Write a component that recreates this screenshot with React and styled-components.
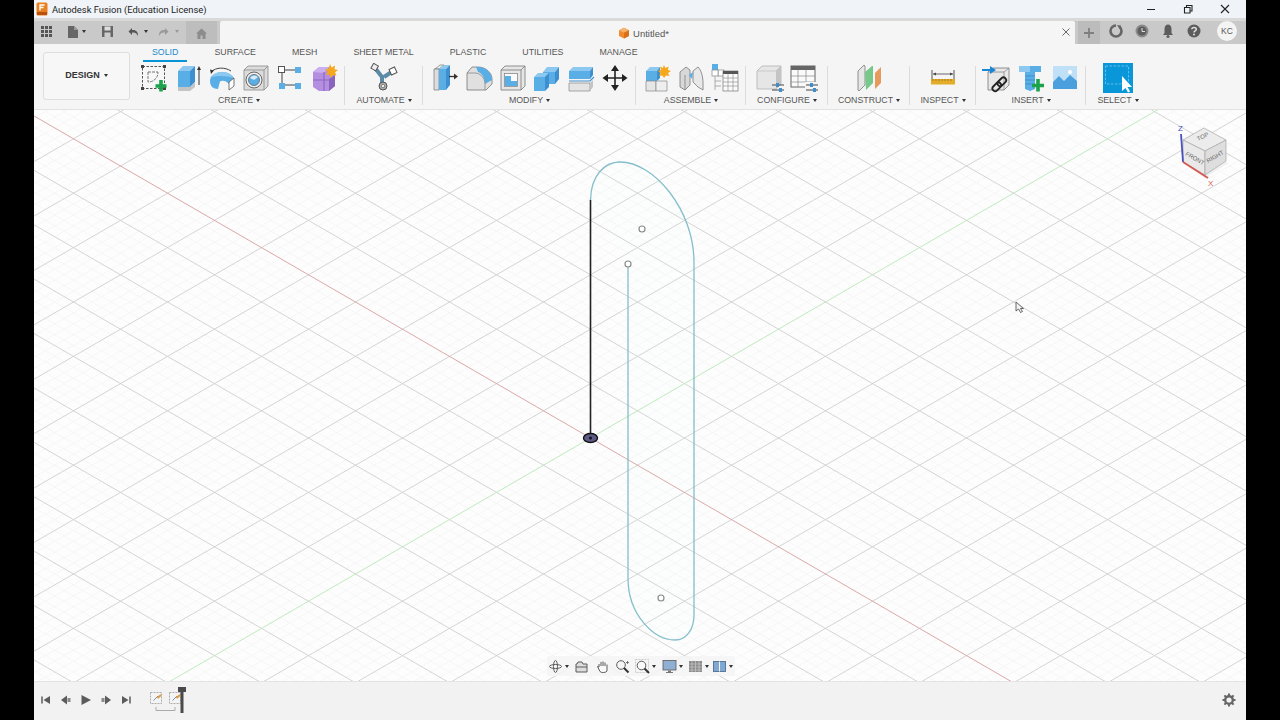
import React from 'react';
import styled, { createGlobalStyle } from 'styled-components';

const Global = createGlobalStyle`
  html, body { margin: 0; padding: 0; height: 100%; background: #000; }
  #root { height: 720px; }
  * { box-sizing: border-box; }
`;

const Stage = styled.div`
  width: 1280px; height: 720px; background: #000; padding: 0 34px;
  font-family: "Liberation Sans", Arial, sans-serif; overflow: hidden;
`;
const Window = styled.div`
  width: 1212px; height: 720px; display: flex; flex-direction: column; background: #f4f4f4;
`;
const TitleBar = styled.div`
  height: 18px; flex: none; display: flex; align-items: center; background: #f0f4f8; padding-left: 2px; position: relative;
`;
const TitleText = styled.span`
  font-family: Roboto, "Noto Sans", sans-serif; font-size: 9.4px; color: #222; margin-left: 4px; white-space: nowrap;
`;
const WinButtons = styled.div`
  margin-left: auto; display: flex; align-items: center; gap: 25px; padding-right: 15px;
`;
const TabStrip = styled.div`
  height: 26px; flex: none; display: flex; align-items: stretch; background: #c9c9c9; border-top: 3px solid #d9d9d9;
`;
const QuickBar = styled.div`
  width: 152px; flex: none; display: flex; align-items: center; padding: 0 0 3px 5.5px;
`;
const Quick = styled.span`
  display: inline-flex; align-items: center; gap: ${p => p.$inner || 3.5}px; margin-right: ${p => p.$gap}px;
`;
const HomeTab = styled.div`
  width: 31px; flex: none; background: #bdbdbd; display: flex; align-items: center; justify-content: center; padding-top: 2px;
`;
const DocTab = styled.div`
  width: 855px; margin-left: 3px; flex: none; background: #f5f5f5; display: flex; align-items: center; justify-content: center; position: relative; padding: 1px 8px 0 0; border-radius: 2px 2px 0 0;
`;
const DocName = styled.span`
  font-size: 9.5px; color: #555; margin-left: 3px;
`;
const TabClose = styled.span`
  position: absolute; right: 4px; top: 6px; display: flex;
`;
const PlusTab = styled.div`
  width: 22px; margin-left: 3px; flex: none; background: #bcbcbc; display: flex; align-items: center; justify-content: center;
`;
const StatusIcons = styled.div`
  display: flex; align-items: center; gap: 10px; padding: 0 0 3px 8px; flex: 1;
`;
const Avatar = styled.span`
  width: 20px; height: 20px; margin-left: 5px; border-radius: 50%; background: #f4f4f4; color: #555; font-size: 8.5px; display: flex; align-items: center; justify-content: center;
`;
const Toolbar = styled.div`
  height: 66px; flex: none; display: flex; background: #f5f5f5; border-bottom: 1px solid #e2e2e2; padding: 0 0 0 9px;
`;
const DesignButton = styled.div`
  width: 87px; height: 48px; margin-top: 8px; flex: none; border: 1px solid #dedede; border-radius: 3px; background: #f7f7f7; padding-bottom: 2px;
  display: flex; align-items: center; justify-content: center; gap: 4px; font-size: 9px; font-weight: 700; color: #333;
`;
const RibbonCol = styled.div`
  display: flex; flex-direction: column; margin-left: 10px; min-width: 0;
`;
const Tabs = styled.div`
  display: flex; gap: 18px; height: 18px; padding-left: 3px;
`;
const Tab = styled.div`
  padding: 3px 9px 0; font-size: 8.8px; color: ${p => p.$active ? '#1a8ccc' : '#555'}; white-space: nowrap;
  border-bottom: 2px solid ${p => p.$active ? '#0696d7' : 'transparent'};
`;
const Groups = styled.div`
  display: flex; height: 42px; margin-top: 1px;
`;
const Group = styled.div`
  width: ${p => p.$w}px; flex: none; display: flex; flex-direction: column; align-items: center; position: relative; padding-right: ${p => p.$pr || 0}px;
  &:not(:last-child)::after { content: ""; position: absolute; right: 0; top: 3px; bottom: 0; width: 1px; background: #dcdcdc; }
`;
const IconRow = styled.div`
  display: flex; gap: 4px; height: 30px; justify-content: center;
`;
const GroupLabel = styled.div`
  display: flex; align-items: center; gap: 3px; font-size: 8.8px; color: #555; margin-top: 2px; height: 10px; white-space: nowrap;
`;
const Caret = styled.span`
  display: inline-block; width: 0; height: 0; border-left: 2px solid transparent; border-right: 2px solid transparent; border-top: 3px solid ${p => p.$c || '#333'};
`;
const Viewport = styled.div`
  height: 571px; flex: none; position: relative; background: #fff; overflow: hidden;
`;
const Scene = styled.svg`
  display: block;
`;
const CubeHolder = styled.div`
  position: absolute; left: 1140px; top: 10px;
`;
const Cursor = styled.div`
  position: absolute; left: 981px; top: 191px;
`;
const NavBar = styled.div`
  position: absolute; left: 513px; top: 546px; height: 20px; width: 188px; background: rgba(245,245,245,.85); display: flex; align-items: center; padding-left: 1px; border-radius: 2px;
`;
const NavItem = styled.span`
  display: inline-flex; align-items: center; gap: 2px; width: ${p => p.$w}px; flex: none;
`;
const Timeline = styled.div`
  flex: 1; display: flex; align-items: center; background: #f2f2f2; border-top: 1px solid #e4e4e4; padding: 0 10px 2px 6px;
`;
const Player = styled.div`
  display: flex; gap: 7px; align-items: center;
`;
const Features = styled.div`
  display: flex; align-items: center; margin-left: 17px;
`;
const Gear = styled.div`
  margin-left: auto; display: flex;
`;

const Svg = ({ children, s = 30, w, h }) => <svg width={w || s} height={h || s} viewBox={`0 0 ${w || s} ${h || s}`} style={{ display: 'block', flex: 'none' }}>{children}</svg>;
const B = { l: '#8cc8f0', m: '#5aaee6', d: '#3d8fcf', g1: '#e6e6e6', g2: '#cfcfcf', g3: '#a9a9a9', o: '#777' };

const ribbonIcons = {
  sketch: <>
    <rect x="3.5" y="3.5" width="22" height="22" fill="#f7f7f7" stroke="#555" strokeWidth="1" strokeDasharray="2.5 1.5" />
    {[[3.5,3.5],[25.5,3.5],[3.5,25.5],[25.5,25.5]].map(([x,y],i)=><rect key={i} x={x-1.5} y={y-1.5} width="3" height="3" fill="#444" />)}
    <path d="M9 9H19M9 9V19C15 19 19 15 19 9" fill="none" stroke="#777" strokeWidth="1" strokeDasharray="3 1"/>
    <path d="M22 17V28.5M16.5 23H27.5" stroke="#1aa34a" strokeWidth="3.6" />
  </>,
  extrude: <>
    <path d="M5 8L10 3H22L17 8Z" fill={B.l} /><path d="M5 8H17V24H5Z" fill={B.m} /><path d="M17 8L22 3V19L17 24Z" fill={B.d} />
    <path d="M5 24H17L22 19V24L17 28H5Z" fill="#c4c4c4" />
    <path d="M26 22V5" stroke="#333" strokeWidth="1" /><path d="M24 7L26 3L28 7Z" fill="#333" />
  </>,
  revolve: <>
    <path d="M4 9C9 4 18 4 24 8" fill="none" stroke="#444" strokeWidth="1" /><path d="M4 11L3 6.5L7 7.5Z" fill="#333"/>
    <path d="M3 18C3 12 10 9 15 9C21 9 25 12 27 15L22 21C19 18 16 17 13 18.5L11 26C6 26 3 23 3 18Z" fill={B.m}/>
    <path d="M3 15C6 10 12 9 15 9C21 9 25 12 27 15C22 13 8 12 3 15Z" fill={B.l}/>
    <path d="M22 19L27 15V23L22 27Z" fill="#fff" stroke="#555" strokeWidth=".8"/>
  </>,
  hole: <>
    <path d="M3 7L7 3H27V23L23 27H3Z" fill="#dcdcdc" stroke="#888" strokeWidth=".8"/><path d="M3 7H23V27M23 7L27 3" fill="none" stroke="#888" strokeWidth=".8"/>
    <circle cx="13" cy="17" r="8" fill="#eee" stroke="#666" strokeWidth="1"/><circle cx="13" cy="17" r="5.5" fill={B.m} stroke="#666" strokeWidth=".8"/><path d="M9 15A5 5 0 0 1 17 14L13 17Z" fill="#d8ebf8"/>
  </>,
  pattern: <>
    <path d="M7 7H22M7 7V22M7 22H22" stroke="#444" strokeWidth="1" />
    <rect x="3.5" y="3.5" width="6" height="6" fill="#fff" stroke="#555"/>
    <rect x="20" y="4" width="6" height="6" fill={B.m}/><rect x="4" y="20" width="6" height="6" fill={B.m}/><rect x="20" y="20" width="6" height="6" fill={B.m}/>
  </>,
  form: <>
    <path d="M4 9L10 4H20L26 9V23L20 28H10L4 24Z" fill="#b48fe0"/><path d="M4 9L10 4H20L15 10Z" fill="#c9aff0"/>
    <path d="M15 9V28M4 17H26" stroke="#8e68c4" strokeWidth="1.2"/><path d="M20 28L26 23V12L20 16Z" fill="#8a63bf"/>
    <path d="M21 1L22.6 4.4L26 2.5L25.5 6.2L29 7L26 9.2L27.5 12.5L24 12L22 15L20.5 11.5L17 12L18.5 8.6L16 6.5L19.5 5.8Z" fill="#f6a81c"/>
  </>,
  automate: <>
    <path d="M6 5L13 14V24M24 8L15 14" fill="none" stroke="#5c8ba8" strokeWidth="4"/>
    <rect x="3" y="1.5" width="5.5" height="5.5" fill="#eee" stroke="#555" transform="rotate(30 6 4)"/>
    <rect x="21" y="5" width="6" height="6" fill="#fff" stroke="#555" transform="rotate(-25 24 8)"/>
    <circle cx="14" cy="23" r="4" fill="#aaa" stroke="#555"/><circle cx="14" cy="23" r="1.7" fill="#eee" stroke="#555" strokeWidth=".6"/>
  </>,
  press: <>
    <path d="M5 6L10 2H14L9 6Z" fill="#eee" stroke="#777" strokeWidth=".7"/><path d="M4 6H9V27H4Z" fill="#ddd" stroke="#777" strokeWidth=".7"/>
    <path d="M9 6H16V27H9Z" fill={B.m}/><path d="M9 6L14 2H20L16 6Z" fill={B.l}/><path d="M16 6L20 2V22L16 27Z" fill={B.d}/>
    <path d="M19 13.5H25" stroke="#333" strokeWidth="1.3"/><path d="M24 10.5L28 13.5L24 16.5Z" fill="#333"/>
  </>,
  fillet: <>
    <path d="M3 27V10L8 4H14C22 4 28 10 28 16V21L22 27Z" fill="#e0e0e0" stroke="#777" strokeWidth=".8"/>
    <path d="M14 4C22 4 28 10 28 17L21 21C21 15 18 10 14 9L12 4Z" fill={B.m}/><path d="M3 10H12C17 11 21 15 21 21V27" fill="none" stroke="#888" strokeWidth=".8"/>
  </>,
  shell: <>
    <path d="M3 7L7 3H27V23L23 27H3Z" fill="#e6e6e6" stroke="#777" strokeWidth=".8"/><path d="M3 7H23V27M23 7L27 3" fill="none" stroke="#777" strokeWidth=".8"/>
    <rect x="6.5" y="10.5" width="13" height="13" fill="#fafafa" stroke="#888" strokeWidth=".8"/><path d="M7 13H13V18H19V23H7Z" fill={B.m}/>
  </>,
  combine: <>
    <path d="M11 9L15 4H27L23 9Z" fill={B.l}/><path d="M11 9H23V21H11Z" fill={B.m}/><path d="M23 9L27 4V16L23 21Z" fill={B.d}/>
    <path d="M2 14L6 10H17L13 14Z" fill={B.l}/><path d="M2 14H13V28H2Z" fill={B.m}/><path d="M13 14L17 10V24L13 28Z" fill={B.d}/>
  </>,
  split: <>
    <path d="M3 8L7 4H27L24 8Z" fill={B.l}/><path d="M3 8H24V16H3Z" fill={B.m}/><path d="M24 8L27 4V12L24 16Z" fill={B.d}/>
    <path d="M3 18H24L28 14" fill="none" stroke={B.d} strokeWidth="1.2"/>
    <path d="M3 20H24V28H3Z" fill="#e4e4e4" stroke="#888" strokeWidth=".7"/><path d="M24 20L27 17V24L24 28Z" fill="#c4c4c4"/>
  </>,
  move: <>
    <path d="M15 6V24M6 15H24" stroke="#222" strokeWidth="1.6"/>
    <path d="M15 2L19 8H11Z M15 28L19 22H11Z M2.5 15L8 11V19Z M27.5 15L22 11V19Z" fill="#222"/>
  </>,
  component: <>
    <path d="M4 8L8 4H18L15 8Z" fill={B.l}/><path d="M4 8H15V18H4Z" fill={B.m}/><path d="M15 8L18 4V15L15 18Z" fill={B.d}/>
    <path d="M4 18H14V28H4Z" fill="#e6e6e6" stroke="#888" strokeWidth=".7"/><path d="M14 18H25V28H14Z" fill="#efefef" stroke="#888" strokeWidth=".7"/>
    <path d="M22 2L23.4 5L26.5 3.5L26 7L29 8L26 10L27.5 13L24 12.5L22 15L20.5 12.5L17 13L18.5 10L16 8L19 7L18 3.5L20.8 5Z" fill="#f6a81c"/>
  </>,
  joint: <>
    <path d="M4 9L10 4L14 7V22L9 27L4 24Z" fill="#d8d8d8" stroke="#777" strokeWidth=".8"/><path d="M9 12V27" stroke="#777" strokeWidth=".7"/>
    <path d="M17 8L22 4C25 7 27 13 27 20V27L22 24L17 19Z" fill="#e8e8e8" stroke="#777" strokeWidth=".8"/>
    <path d="M13 12L17 9L16 16Z" fill={B.m}/>
  </>,
  bom: <>
    <rect x="2" y="1" width="6" height="6" fill={B.m}/><rect x="8" y="7" width="6" height="6" fill="#fff" stroke="#888" strokeWidth=".7"/><rect x="2" y="7" width="6" height="6" fill="#fff" stroke="#888" strokeWidth=".7"/>
    <path d="M5 13V27M5 18H11M5 23H11" stroke="#999" strokeWidth=".8" fill="none"/>
    <rect x="13" y="8" width="15" height="20" fill="#fafafa" stroke="#777" strokeWidth=".7"/><rect x="13" y="8" width="15" height="3" fill="#555"/>
    <path d="M13 15H28M13 19H28M13 23H28M18 11V28M23 11V28" stroke="#888" strokeWidth=".6"/>
  </>,
  cfgCube: <>
    <path d="M2 8L7 3H26V21L21 26H2Z" fill="#e6e6e6" stroke="#aaa" strokeWidth=".7"/><path d="M21 8L26 3V21L21 26Z" fill="#c4c4c4"/><path d="M2 8H21L26 3" fill="none" stroke="#bbb" strokeWidth=".7"/>
    <path d="M17 22H29M17 27H29" stroke="#444" strokeWidth="1"/><rect x="21" y="20" width="3" height="4" fill={B.d}/><rect x="24" y="25" width="3" height="4" fill={B.d}/>
  </>,
  cfgTable: <>
    <rect x="2" y="3" width="24" height="21" fill="#fafafa" stroke="#666"/><rect x="2" y="3" width="24" height="4" fill="#666"/>
    <path d="M9 7V24M17 7V24M2 13H26M2 19H26" stroke="#888" strokeWidth=".7"/>
    <rect x="16" y="19" width="14" height="10" fill="#f5f5f5"/>
    <path d="M17 22H29M17 27H29" stroke="#444" strokeWidth="1"/><rect x="21" y="20" width="3" height="4" fill={B.d}/><rect x="24" y="25" width="3" height="4" fill={B.d}/>
  </>,
  construct: <>
    <path d="M4 8L10 2L11 3V22L5 28L4 27Z" fill="#e6e6e6" stroke="#777" strokeWidth=".8"/>
    <path d="M11 9L18 3L19 3V20L12 27Z" fill="#76c88b"/>
    <path d="M21 10L27 4V20L21 26Z" fill="#e79a5e"/>
  </>,
  measure: <>
    <path d="M4 7V16M26 7V16" stroke="#555" strokeWidth="1"/><path d="M5 11H25" stroke="#444" strokeWidth=".8"/><path d="M5 11L8 9.5V12.5Z M25 11L22 9.5V12.5Z" fill="#444"/>
    <rect x="3" y="16" width="24" height="5.5" fill="#e3ad2a"/><path d="M5 16V18M8 16V18M11 16V18M14 16V18M17 16V18M20 16V18M23 16V18" stroke="#8b6a10" strokeWidth=".7"/>
  </>,
  insert: <>
    <path d="M6 9L11 5H27V22L22 27H6Z" fill="#e8e8e8" stroke="#777" strokeWidth=".8"/><path d="M6 9H22V27M22 9L27 5" fill="none" stroke="#888" strokeWidth=".8"/>
    <path d="M0 6H8V3L14 7L8 11V8H0Z" fill="#1a86d6"/>
    <g fill="none" stroke="#222" strokeWidth="1.8"><rect x="15" y="16" width="10" height="5.5" rx="2.7" transform="rotate(-45 20 19)"/><rect x="10" y="21" width="10" height="5.5" rx="2.7" transform="rotate(-45 15 24)"/></g>
  </>,
  bolt: <>
    <path d="M3 3H25V9H19V26L14 28L9 26V9H3Z" fill={B.m}/><path d="M3 3H14V9H3Z" fill={B.l}/>
    <path d="M9 13H19M9 17H19M9 21H19" stroke={B.d} strokeWidth="1"/>
    <path d="M22 16V28.5M16 22.5H28" stroke="#1aa34a" strokeWidth="3.6"/>
  </>,
  image: <>
    <rect x="3" y="3" width="24" height="23" fill="#4a9fdc"/><path d="M3 3H27V18L20 12L14 18L9 13L3 19Z" fill="#bfe0f6"/>
    <circle cx="20" cy="9" r="2" fill="#fff"/>
  </>,
  select: <>
    <rect x="0" y="0" width="30" height="30" fill="#0a97d9"/><rect x="2.5" y="3" width="23" height="18" fill="none" stroke="#63bde8" strokeWidth="1" strokeDasharray="2.5 1.5"/>
    <path d="M19 13V28L22.5 25L25 29.5L27 28.5L24.5 24H29Z" fill="#fff"/>
  </>,
};

const groups = [
  { w: 205, pr: 7, label: 'CREATE', icons: ['sketch', 'extrude', 'revolve', 'hole', 'pattern', 'form'] },
  { w: 78, label: 'AUTOMATE', icons: ['automate'] },
  { w: 213, label: 'MODIFY', icons: ['press', 'fillet', 'shell', 'combine', 'split', 'move'] },
  { w: 110, label: 'ASSEMBLE', icons: ['component', 'joint', 'bom'] },
  { w: 82, label: 'CONFIGURE', icons: ['cfgCube', 'cfgTable'] },
  { w: 82, label: 'CONSTRUCT', icons: ['construct'] },
  { w: 66, label: 'INSPECT', icons: ['measure'] },
  { w: 110, label: 'INSERT', icons: ['insert', 'bolt', 'image'] },
  { w: 64, label: 'SELECT', icons: ['select'] },
];
const tabNames = ['SOLID', 'SURFACE', 'MESH', 'SHEET METAL', 'PLASTIC', 'UTILITIES', 'MANAGE'];

const OX = 556.5, OY = 328, DX = 47, DY = 27.2;

function gridLines() {
  const major = [], minor = [];
  const L = 60;
  for (let k = -130; k <= 130; k++) {
    const px = k * DX / 5, py = k * DY / 5;
    const isMajor = k % 5 === 0;
    const a = [OX + px - L * DX, OY - py - L * DY, OX + px + L * DX, OY - py + L * DY];
    const b = [OX + px - L * DX, OY + py + L * DY, OX + px + L * DX, OY + py - L * DY];
    const pick = isMajor ? major : minor;
    if (k !== 0) { pick.push(a); pick.push(b); }
  }
  const d = arr => arr.map(([a, b, c, e]) => `M${a} ${b}L${c} ${e}`).join('');
  return { major: d(major), minor: d(minor) };
}
const grid = gridLines();

const SceneView = () => (
  <Scene width="1212" height="571" viewBox="0 0 1212 571">
    <rect width="1212" height="571" fill="#fdfdfd" />
    <path d={grid.minor} stroke="#f3f3f3" strokeWidth=".7" fill="none" />
    <path d={grid.major} stroke="#d4d4d4" strokeWidth="1" fill="none" />
    <path d={`M${OX - 600} ${OY - 600 * DY / DX}L${OX + 600} ${OY + 600 * DY / DX}`} stroke="#dba8a8" strokeWidth="1" />
    <path d={`M${OX - 600} ${OY + 600 * DY / DX}L${OX + 600} ${OY - 600 * DY / DX}`} stroke="#bfeabd" strokeWidth="1" />
    <path d="M556.5 90C557 66 570 52 586 52C620 52 660 100 660 152V505C660 520 652 530 641 530C620 530 594 505 594 468V154"
      fill="rgba(215,245,248,.03)" stroke="#84bfca" strokeWidth="1.3" />
    <path d="M556.5 90V328" stroke="#222" strokeWidth="1.6" />
    <circle cx="608" cy="119" r="3" fill="#fff" stroke="#8a8a8a" strokeWidth="1.2" />
    <circle cx="594" cy="154" r="3" fill="#fff" stroke="#8a8a8a" strokeWidth="1.2" />
    <circle cx="627" cy="488" r="3" fill="#fff" stroke="#8a8a8a" strokeWidth="1.2" />
    <ellipse cx="556.5" cy="328" rx="7" ry="4.5" fill="#5d5a86" stroke="#111" strokeWidth="1.4" />
    <circle cx="556.5" cy="328" r="1.5" fill="#111" />
  </Scene>
);

const ViewCube = () => (
  <svg width="70" height="70" viewBox="1176 120 70 70" style={{ display: 'block' }}>
    <path d="M1188 164L1207 178L1230 163L1212 154Z" fill="#ececec" opacity=".8" />
    <path d="M1185 140L1206 128L1228 140L1207 151Z" fill="#ececec" stroke="#a8a8a8" strokeWidth=".7" />
    <path d="M1185 140L1207 151V175L1185 162Z" fill="#e9e9e9" stroke="#a8a8a8" strokeWidth=".7" />
    <path d="M1207 151L1228 140V161L1207 175Z" fill="#dedede" stroke="#a8a8a8" strokeWidth=".7" />
    <path d="M1185 162L1183 134" stroke="#4650bf" strokeWidth="1.8" />
    <path d="M1185 162L1210 178" stroke="#d45b52" strokeWidth="2" />
    <text x="1180" y="131" fontSize="8" fill="#4650bf" fontFamily="Liberation Sans">Z</text>
    <text x="1210" y="186" fontSize="8" fill="#d45b52" fontFamily="Liberation Sans">X</text>
    <text fontSize="6" fill="#666" fontFamily="Liberation Sans" transform="translate(1200 141) rotate(-25)">TOP</text>
    <text fontSize="6" fill="#666" fontFamily="Liberation Sans" transform="translate(1187 155) rotate(30)">FRONT</text>
    <text fontSize="6" fill="#666" fontFamily="Liberation Sans" transform="translate(1210 163) rotate(-30)">RIGHT</text>
  </svg>
);

const C = '#5c5c5c';

export default function App() {
  return (
    <Stage>
      <Global />
      <Window>
        <TitleBar>
          <Svg w={12} h={14}>
            <rect x=".5" y=".5" width="11" height="13" rx="1.5" fill="#e8801f" />
            <rect x="1" y="10" width="10" height="3" fill="#b8500f" />
            <path d="M4 8.5V3H8.5M4 5.5H7.5" stroke="#fff" strokeWidth="1.4" fill="none" />
          </Svg>
          <TitleText>Autodesk Fusion (Education License)</TitleText>
          <WinButtons>
            <Svg s={12}><path d="M2 6.5H10" stroke="#222" strokeWidth="1" /></Svg>
            <Svg s={12}><path d="M2.5 4.5H8V10H2.5ZM4.5 4.5V2.5H10V8H8" fill="none" stroke="#222" strokeWidth="1.1" /></Svg>
            <Svg s={12}><path d="M2 2L10 10M10 2L2 10" stroke="#222" strokeWidth="1.1" /></Svg>
          </WinButtons>
        </TitleBar>
        <TabStrip>
          <QuickBar>
            <Quick $gap={13}>
              <Svg s={13}><path d="M1 1h3v3H1zM5 1h3v3H5zM9 1h3v3H9zM1 5h3v3H1zM5 5h3v3H5zM9 5h3v3H9zM1 9h3v3H1zM5 9h3v3H5zM9 9h3v3H9z" fill="#555" /></Svg>
            </Quick>
            <Quick $gap={15}>
              <Svg s={13}><path d="M2 1H8L12 5V13H2Z" fill="#666" /><path d="M8 1V5H12" fill="#999" /></Svg>
              <Caret />
            </Quick>
            <Quick $gap={13}>
              <Svg s={13}><path d="M1 1H12V12H1Z" fill="#666" /><rect x="3.5" y="1.5" width="6" height="4" fill="#ddd" /><rect x="3.5" y="7.5" width="6" height="4.5" fill="#ccc" /></Svg>
            </Quick>
            <Quick $gap={9}>
              <Svg s={13}><path d="M5 3L1.5 6.5L5 10V7.5C8 7.5 10 8 11 11.5C11.5 7 9 4.5 5 5Z" fill="#555" /></Svg>
              <Caret />
            </Quick>
            <Quick $gap={0} $inner={5}>
              <Svg s={13}><path d="M8 3L11.5 6.5L8 10V7.5C5 7.5 3 8 2 11.5C1.5 7 4 4.5 8 5Z" fill="#9a9a9a" /></Svg>
              <Caret $c="#999" />
            </Quick>
          </QuickBar>
          <HomeTab>
            <Svg s={13}><path d="M1 6.5L6.5 1.5L12 6.5H10.5V12H7.5V8.5H5.5V12H2.5V6.5Z" fill="#8c8c8c" /></Svg>
          </HomeTab>
          <DocTab>
            <Svg s={12}><path d="M6 .8L11 3.3V9L6 11.5L1 9V3.3Z" fill="#f08c2e" /><path d="M1 3.3L6 5.8L11 3.3L6 .8Z" fill="#f7b36c" /><path d="M6 5.8V11.5L11 9V3.3Z" fill="#d8711a" /></Svg>
            <DocName>Untitled*</DocName>
            <TabClose><Svg s={10}><path d="M1.5 1.5L8.5 8.5M8.5 1.5L1.5 8.5" stroke="#666" strokeWidth="1" /></Svg></TabClose>
          </DocTab>
          <PlusTab>
            <Svg s={12}><path d="M6 1V11M1 6H11" stroke="#7f7f7f" strokeWidth="1.8" /></Svg>
          </PlusTab>
          <StatusIcons>
            <Svg s={16}><circle cx="8" cy="8" r="5.500" fill="none" stroke="#666" strokeWidth="2.600" /><path d="M8 8L14 1H8Z" fill="#c9c9c9" /><path d="M9 2L13 2.500L12 6.500Z" fill="#666" /></Svg>
            <Svg s={16}><circle cx="8" cy="8" r="6.500" fill="#8a8a8a" /><circle cx="8" cy="8" r="4.500" fill="#5e5e5e" /><path d="M8 5V8.500H11" stroke="#ddd" strokeWidth="1" fill="none" /></Svg>
            <Svg s={16}><path d="M8 1.500C10 1.500 11.500 3 11.500 6V10L13 12H3L4.500 10V6C4.500 3 6 1.500 8 1.500Z" fill="#5c5c5c" /><circle cx="8" cy="13.500" r="1.500" fill="#5c5c5c" /></Svg>
            <Svg s={16}><circle cx="8" cy="8" r="6.500" fill="#5c5c5c" /><path d="M5.800 6.300C5.800 3.900 10.300 3.900 10.300 6.300C10.300 7.900 8 7.900 8 9.500" fill="none" stroke="#ddd" strokeWidth="1.500" /><circle cx="8" cy="11.500" r="1" fill="#ddd" /></Svg>
            <Avatar>KC</Avatar>
          </StatusIcons>
        </TabStrip>
        <Toolbar>
          <DesignButton>DESIGN <Caret /></DesignButton>
          <RibbonCol>
            <Tabs>
              {tabNames.map((t, i) => <Tab key={t} $active={i === 0}>{t}</Tab>)}
            </Tabs>
            <Groups>
              {groups.map(g => (
                <Group key={g.label} $w={g.w} $pr={g.pr}>
                  <IconRow>
                    {g.icons.map(n => <Svg key={n}>{ribbonIcons[n]}</Svg>)}
                  </IconRow>
                  <GroupLabel>{g.label} <Caret /></GroupLabel>
                </Group>
              ))}
            </Groups>
          </RibbonCol>
        </Toolbar>
        <Viewport>
          <SceneView />
          <CubeHolder><ViewCube /></CubeHolder>
          <Cursor>
            <Svg s={12}><path d="M1 1V10L3.500 8L5.500 11.500L7.500 10.500L5.500 7.500H8.500Z" fill="#f4f4f4" stroke="#444" strokeWidth=".8" /></Svg>
          </Cursor>
          <NavBar>
            <NavItem $w={26}>
              <Svg s={15}><g fill="none" stroke={C} strokeWidth="1"><ellipse cx="7.500" cy="7.500" rx="2" ry="6" /><ellipse cx="7.500" cy="7.500" rx="6" ry="2" /></g></Svg><Caret />
            </NavItem>
            <NavItem $w={21}>
              <Svg s={15}><path d="M3 5L4 3H8L9 5H13V13H2V5Z" fill="#ddd" stroke={C} strokeWidth="1" /><path d="M2 8H13" stroke={C} strokeWidth="1" /></Svg>
            </NavItem>
            <NavItem $w={20}>
              <Svg s={15}><path d="M4 8V5M6 7V3M8 7V2.500M10 7V3.500M12 8V5.500M4 8L2.500 7.500L5 12.500C6 14 11 14 12 12V8" fill="#fafafa" stroke={C} strokeWidth="1" /></Svg>
            </NavItem>
            <NavItem $w={20}>
              <Svg s={15}><circle cx="6" cy="6" r="4.300" fill="none" stroke={C} strokeWidth="1" /><path d="M9 9L13.500 13.500" stroke="#333" strokeWidth="2" /><path d="M12.500 2V5M11 3.500H14" stroke={C} strokeWidth=".8" /></Svg>
            </NavItem>
            <NavItem $w={27}>
              <Svg s={15}><rect x=".500" y=".500" width="13" height="13" fill="none" stroke="#bbb" strokeWidth=".7" strokeDasharray="2 1" /><circle cx="6.500" cy="6.500" r="4.300" fill="#fafafa" stroke={C} strokeWidth="1" /><path d="M9.500 9.500L14 14" stroke="#333" strokeWidth="2" /></Svg><Caret />
            </NavItem>
            <NavItem $w={26}>
              <Svg s={15}><rect x="1" y="1.500" width="13" height="9.500" fill="#8fb0d2" stroke="#5a5a5a" strokeWidth=".8" /><path d="M6 11.500H9V13H11V14H4V13H6Z" fill="#777" /></Svg><Caret />
            </NavItem>
            <NavItem $w={24}>
              <Svg s={15}><rect x="1" y="2" width="13" height="11" fill="#8c8c8c" /><path d="M4 2V13M7.500 2V13M11 2V13M1 5H14M1 8H14M1 11H14" stroke="#d0d0d0" strokeWidth=".6" /></Svg><Caret />
            </NavItem>
            <NavItem $w={24}>
              <Svg s={15}><rect x="1.500" y="2.500" width="12" height="10" fill="#7fa9d3" stroke="#4f6f8f" strokeWidth=".9" /><path d="M7.500 2.500V12.500" stroke="#f4f4f4" strokeWidth="1" /></Svg><Caret />
            </NavItem>
          </NavBar>
        </Viewport>
        <Timeline>
          <Player>
            <Svg s={12}><path d="M2 2.500V9.500" stroke={C} strokeWidth="1.500" /><path d="M10 2L3.500 6L10 10Z" fill={C} /></Svg>
            <Svg s={14}><path d="M8 2.500L2 7L8 11.500Z" fill={C} /><rect x="8.500" y="5" width="3" height="4" fill="#8a8a8a" /></Svg>
            <Svg s={12}><path d="M1.500 1L11 6L1.500 11Z" fill={C} /></Svg>
            <Svg s={14}><path d="M6 2.500L12 7L6 11.500Z" fill={C} /><rect x="2.500" y="5" width="3" height="4" fill="#8a8a8a" /></Svg>
            <Svg s={12}><path d="M10 2.500V9.500" stroke={C} strokeWidth="1.500" /><path d="M2 2L8.500 6L2 10Z" fill={C} /></Svg>
          </Player>
          <Features>
            <Svg w={42} h={28}>
              <g fill="#f4f4f4" stroke="#9a9a9a" strokeWidth=".8">
                <rect x="1.500" y="6.500" width="11" height="11" strokeDasharray="2 1" />
                <rect x="20.500" y="6.500" width="11" height="11" strokeDasharray="2 1" />
              </g>
              <path d="M4.500 14.500L9 10M23.500 14.500L28 10" stroke="#7f8fb0" strokeWidth="1" />
              <path d="M8.500 12L12 9M27.500 12L31 9" stroke="#e09a3a" strokeWidth="2" />
              <path d="M7 21V24.500H26V21" stroke="#aaa" strokeWidth="1" fill="none" />
              <path d="M29 1H37V6H34.500V27H31.500V6H29Z" fill="#4a4a4a" />
            </Svg>
          </Features>
          <Gear>
            <Svg s={14}>
              <circle cx="7" cy="7" r="3.800" fill="none" stroke="#666" strokeWidth="2.400" />
              <path d="M7 .500V13.500M.500 7H13.500M2.400 2.400L11.600 11.600M11.600 2.400L2.400 11.600" stroke="#666" strokeWidth="2" strokeDasharray="2.200 8.600" />
            </Svg>
          </Gear>
        </Timeline>
      </Window>
    </Stage>
  );
}
